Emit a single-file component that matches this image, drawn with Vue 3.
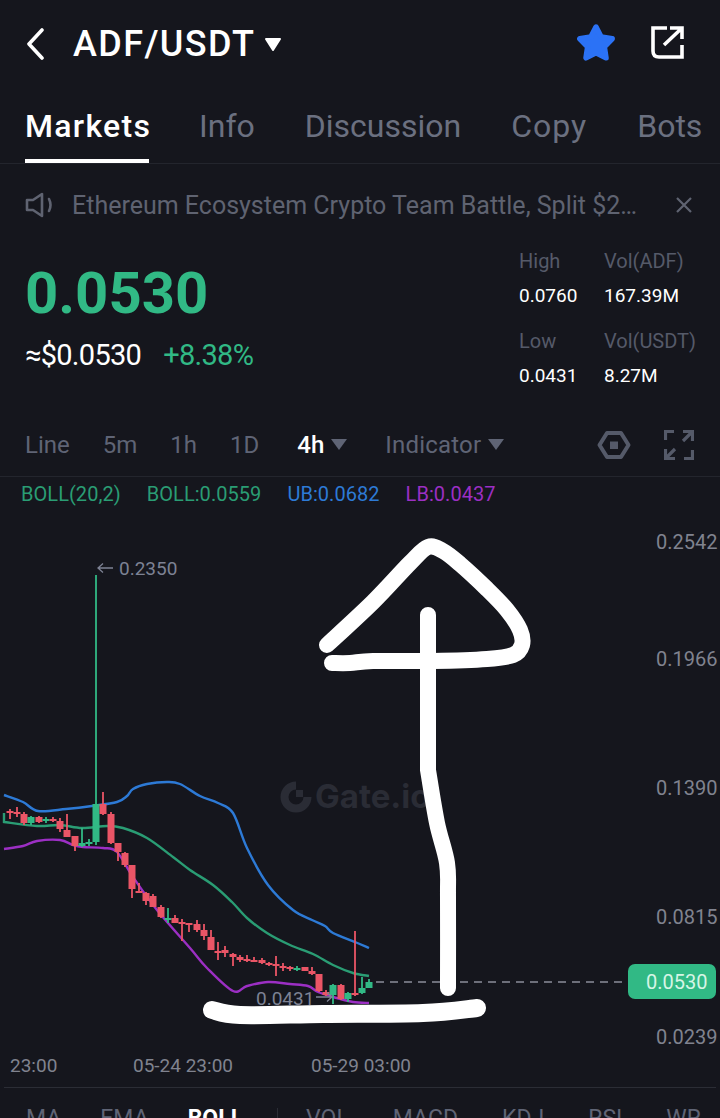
<template>
  <div class="page">
    <header class="top">
      <svg class="back" width="18" height="32" viewBox="0 0 18 32" fill="none">
        <path d="M16 2 3 16l13 14" stroke="#fff" stroke-width="3.6" stroke-linecap="round" stroke-linejoin="round"/>
      </svg>
      <h1 class="pair">ADF/USDT</h1>
      <svg class="pair-caret" width="18" height="15" viewBox="0 0 18 15">
        <path d="M2 2h14L9 13z" fill="#fff" stroke="#fff" stroke-width="2" stroke-linejoin="round"/>
      </svg>
      <svg class="star" width="44" height="44" viewBox="0 0 40 40">
        <polygon points="20,5.5 24.7,14.5 34.7,16.2 27.6,23.5 29.1,33.5 20,29 10.9,33.5 12.4,23.5 5.3,16.2 15.3,14.5" fill="#2b72f6" stroke="#2b72f6" stroke-width="5" stroke-linejoin="round"/>
      </svg>
      <svg class="share" width="36" height="36" viewBox="0 0 36 36" fill="none" stroke="#fff" stroke-width="3.6">
        <path d="M18 3H4v23q0 6 6 6h23V20"/>
        <path d="M15 20 33 3M21 3h12v11"/>
      </svg>
    </header>

    <nav class="tabs">
      <span v-for="t in tabs" :key="t" class="tab" :class="{ active: t === 'Markets' }">{{ t }}</span>
    </nav>

    <div class="notice">
      <svg width="30" height="26" viewBox="0 0 30 26" fill="none" stroke="#5f6371" stroke-width="2.6" stroke-linejoin="round">
        <path d="M2 8h6l9-6v22l-9-6H2z"/>
        <path d="M24 7q3 6 0 12" stroke-linecap="round"/>
      </svg>
      <span class="notice-text">Ethereum Ecosystem Crypto Team Battle, Split $2…</span>
      <svg width="16" height="16" viewBox="0 0 16 16" stroke="#5f6371" stroke-width="2.2">
        <path d="m1 1 14 14M15 1 1 15"/>
      </svg>
    </div>

    <section class="ticker">
      <div class="ticker-left">
        <div class="last">0.0530</div>
        <div class="sub">
          <span class="fiat">≈$0.0530</span>
          <span class="change">+8.38%</span>
        </div>
      </div>
      <div class="stats">
        <div v-for="s in stats" :key="s.label" class="stat">
          <div class="stat-label">{{ s.label }}</div>
          <div class="stat-value">{{ s.value }}</div>
        </div>
      </div>
    </section>

    <div class="toolbar">
      <span class="iv">Line</span>
      <span class="iv">5m</span>
      <span class="iv">1h</span>
      <span class="iv">1D</span>
      <span class="iv current">4h</span>
      <svg class="caret" width="18" height="13" viewBox="0 0 18 13"><path d="M1 1h16L9 12z" fill="#5f6475"/></svg>
      <span class="iv ind">Indicator</span>
      <svg class="caret" width="18" height="13" viewBox="0 0 18 13"><path d="M1 1h16L9 12z" fill="#5f6475"/></svg>
      <svg class="hex" width="34" height="28" viewBox="0 0 34 28" fill="none">
        <path d="M2.500 14 10 2h14l7.500 12L24 26H10z" stroke="#555a69" stroke-width="4" stroke-linejoin="round"/>
        <rect x="13" y="10.500" width="8" height="7.500" fill="#555a69"/>
      </svg>
      <svg class="full" width="30" height="30" viewBox="0 0 30 30" fill="none" stroke="#555a69" stroke-width="3.200">
        <path d="M1.500 10V1.500H10M28.500 20v8.500H20"/>
        <path d="M19 1.500h9.500V11M28 2l-9 9M1.500 19v9.500H11M2 28l9-9"/>
      </svg>
    </div>

    <div class="legend">
      <span class="green">BOLL(20,2)</span>
      <span class="green">BOLL:0.0559</span>
      <span class="blue">UB:0.0682</span>
      <span class="purple">LB:0.0437</span>
    </div>

    <svg class="chart" width="720" height="577" viewBox="0 510 720 577">
      <!-- watermark -->
      <g>
        <path d="M296 785.500a11.500 11.500 0 1 0 11.500 11.500" fill="none" stroke="#2a2c35" stroke-width="8"/>
        <rect x="296" y="790" width="7" height="7" fill="#2a2c35"/>
        <text x="315" y="808" class="mark">Gate.io</text>
      </g>

      <path :d="upper" fill="none" stroke="#2d7ad6" stroke-width="2.400"/>
      <path :d="middle" fill="none" stroke="#2a9d74" stroke-width="2.400"/>
      <path :d="lower" fill="none" stroke="#9c2fc4" stroke-width="2.400"/>

      <g v-for="c in candles" :key="c.x" :fill="c.up ? green : red" :stroke="c.up ? green : red">
        <line :x1="c.x" :x2="c.x" :y1="c.hi" :y2="c.lo" stroke-width="1.800"/>
        <rect :x="c.x - 3.500" :y="c.top" width="7" :height="Math.max(c.bot - c.top, 2)" stroke="none"/>
      </g>

      <line x1="376" x2="628" y1="982" y2="982" stroke="#8a8d99" stroke-width="1.500" stroke-dasharray="8 6"/>

      <text x="119" y="574.500" class="note">0.2350</text>
      <path d="M113 568H98m5-4.500-5 4.500 5 4.500" fill="none" stroke="#7d8294" stroke-width="1.300"/>
      <text x="256" y="1005" class="note">0.0431</text>
      <path d="M316 997h16m-5-4.500 5 4.500-5 4.500" fill="none" stroke="#7d8294" stroke-width="1.300"/>

      <text v-for="p in prices" :key="p.v" x="656" :y="p.y" class="axis">{{ p.v }}</text>
      <text v-for="d in dates" :key="d.v" :x="d.x" y="1072" class="axis date">{{ d.v }}</text>

      <rect x="628" y="964" width="88" height="35" rx="7" :fill="green"/>
      <text x="646" y="989" class="tag">0.0530</text>

      <!-- hand drawn marks -->
      <g fill="none" stroke="#fff" stroke-linecap="round" stroke-linejoin="round">
        <path :d="head" stroke-width="16"/>
        <path :d="shaft" stroke-width="16"/>
        <path :d="base" stroke-width="18"/>
      </g>
    </svg>

    <div class="bottom">
      <span>MA</span>
      <span>EMA</span>
      <span class="on">BOLL</span>
      <div class="more">
        <span v-for="b in moreTabs" :key="b">{{ b }}</span>
      </div>
    </div>
  </div>
</template>

<script setup>
const tabs = ['Markets', 'Info', 'Discussion', 'Copy', 'Bots']
const moreTabs = ['VOL', 'MACD', 'KDJ', 'RSI', 'WR']

const stats = [
  { label: 'High', value: '0.0760' },
  { label: 'Vol(ADF)', value: '167.39M' },
  { label: 'Low', value: '0.0431' },
  { label: 'Vol(USDT)', value: '8.27M' }
]

const green = '#31b985'
const red = '#ea5566'

// catmull-rom through the points, turned into cubic beziers
const smooth = (str) => {
  const p = str.split(' ').map((s) => s.split(',').map(Number))
  let d = `M${p[0][0]} ${p[0][1]}`
  for (let i = 0; i < p.length - 1; i++) {
    const a = p[i - 1] || p[i]
    const b = p[i]
    const c = p[i + 1]
    const e = p[i + 2] || c
    const c1 = [b[0] + (c[0] - a[0]) / 6, b[1] + (c[1] - a[1]) / 6]
    const c2 = [c[0] - (e[0] - b[0]) / 6, c[1] - (e[1] - b[1]) / 6]
    d += `C${c1[0]} ${c1[1]} ${c2[0]} ${c2[1]} ${c[0]} ${c[1]}`
  }
  return d
}

const upper = smooth('4,795 23,802 38,811 66,809 92,806 117,802 127,796 133,789 147,784 167,782 180,784 200,796 218,803 233,813 247,848 268,885 293,910 312,920 325,926 333,933 355,942 369,948')
const middle = 'M4 813V822' + smooth('4,822 37,826 60,825 82,828 107,826 123,828 147,838 173,857 190,870 213,885 232,902 247,918 267,933 290,945 313,954 333,965 353,973 369,976').replace('M4 822', '')
const lower = smooth('4,849 23,846 37,841 60,840 73,845 83,847 103,848 117,852 133,877 157,910 190,948 207,968 233,991 247,986 268,982 290,984 308,986 318,992 333,997 353,1002 369,1003')

const head = smooth('327,645 373,602 410,563 428,547 443,551 460,564 487,589 507,610 520,630 522,645 513,655 487,659 433,661 373,661 350,663 332,663')
const shaft = 'M428 615V770' + smooth('428,770 437,823 447,863 448,897 448,988').replace('M428 770', '')
const base = smooth('212,1010 240,1015 323,1014 423,1013 477,1008')

// x, wick top, wick bottom, body top, body bottom, rising
const raw = [
  [10, 809, 819, 811, 813], [17, 807, 817, 812, 813], [24, 812, 825, 814, 823], [31, 816, 825, 817, 823, 1],
  [39, 816, 823, 817, 822], [46, 817, 823, 819, 821, 1], [53, 817, 822, 819, 820], [60, 818, 832, 821, 829],
  [67, 814, 837, 830, 837], [75, 836, 851, 836, 846], [82, 828, 847, 843, 846, 1], [89, 839, 846, 842, 843, 1],
  [96, 575, 845, 804, 842, 1], [103, 792, 815, 804, 814], [111, 812, 844, 814, 843], [118, 843, 861, 843, 852],
  [125, 852, 867, 853, 865], [132, 865, 898, 865, 889], [139, 883, 892, 891, 892], [146, 892, 905, 893, 901],
  [153, 894, 907, 896, 907], [161, 905, 918, 907, 917], [168, 908, 923, 918, 919, 1], [175, 915, 923, 918, 923],
  [182, 919, 941, 922, 923], [189, 923, 932, 923, 924], [197, 920, 932, 924, 930], [204, 924, 940, 930, 936],
  [211, 930, 950, 937, 950], [218, 942, 960, 951, 952], [225, 946, 957, 950, 953], [233, 953, 966, 954, 957],
  [240, 955, 962, 957, 960], [247, 955, 962, 959, 960], [254, 957, 962, 960, 961], [262, 958, 964, 960, 963],
  [269, 962, 966, 963, 964], [276, 956, 976, 964, 966], [283, 963, 971, 966, 968], [290, 966, 971, 967, 968],
  [297, 966, 971, 968, 969, 1], [305, 967, 971, 967, 971], [312, 967, 975, 971, 974], [319, 974, 992, 974, 991],
  [326, 990, 996, 992, 995], [333, 984, 1004, 985, 995, 1], [341, 984, 1000, 985, 999], [348, 992, 1002, 993, 999, 1],
  [355, 931, 996, 993, 995], [362, 977, 994, 988, 993, 1], [369, 979, 988, 982, 988, 1]
]
const candles = raw.map(([x, hi, lo, top, bot, up]) => ({ x, hi, lo, top, bot, up: !!up }))

const prices = [
  { v: '0.2542', y: 549 },
  { v: '0.1966', y: 666 },
  { v: '0.1390', y: 795 },
  { v: '0.0815', y: 924 },
  { v: '0.0239', y: 1044 }
]

const dates = [
  { v: '23:00', x: 10 },
  { v: '05-24 23:00', x: 133 },
  { v: '05-29 03:00', x: 311 }
]
</script>

<style>
html, body {
  background: #15161d;
}
</style>

<style scoped>
.page {
  width: 720px;
  height: 1118px;
  overflow: hidden;
  background: #15161d;
  color: #fff;
  font-family: Roboto, "Noto Sans", sans-serif;
}

.top {
  display: flex;
  align-items: center;
  height: 88px;
  padding-left: 26px;
}

.pair {
  margin: 0 0 0 29px;
  font-size: 36px;
  font-weight: 500;
  letter-spacing: 1.4px;
  line-height: 1;
}

.pair-caret {
  margin-left: 9px;
}

.star {
  margin-left: auto;
  margin-top: -3px;
}

.share {
  margin-left: 31px;
  margin-right: 35px;
  margin-top: -3px;
}

.tabs {
  display: flex;
  height: 76px;
  gap: 50px;
  padding-left: 25px;
  border-bottom: 1px solid #23252d;
  box-sizing: border-box;
}

.tab {
  height: 75px;
  box-sizing: border-box;
  padding-top: 18px;
  font-size: 32px;
  line-height: 40px;
  color: #6b7080;
  white-space: nowrap;
}

.tab:nth-child(4) {
  letter-spacing: 1px;
}

.tab.active {
  width: 124px;
  color: #fff;
  font-weight: 500;
  letter-spacing: 1.300px;
  border-bottom: 4px solid #fff;
}

.notice {
  display: flex;
  align-items: center;
  height: 82px;
  padding-left: 25px;
  color: #5f6371;
}

.notice-text {
  margin-left: 17px;
  width: 604px;
  font-size: 25px;
  white-space: nowrap;
}

.ticker {
  display: flex;
  height: 164px;
}

.ticker-left {
  width: 519px;
  padding-left: 25px;
  box-sizing: border-box;
}

.last {
  margin-top: 14px;
  font-size: 58px;
  font-weight: 700;
  line-height: 66px;
  color: #31b985;
}

.sub {
  margin-top: 10px;
  display: flex;
  gap: 22px;
  font-size: 29px;
  line-height: 38px;
  letter-spacing: -0.7px;
}

.change {
  color: #31b985;
}

.stats {
  display: grid;
  grid-template-columns: 85px 115px;
  grid-auto-rows: 80px;
  margin-top: 1px;
}

.stat-label {
  margin-top: 1px;
  font-size: 20px;
  line-height: 26px;
  color: #555a69;
  white-space: nowrap;
}

.stat-value {
  margin-top: 9px;
  font-size: 19px;
  line-height: 26px;
  white-space: nowrap;
}

.toolbar {
  display: flex;
  align-items: center;
  height: 67px;
  padding-top: 3px;
  padding-left: 25px;
  border-bottom: 1px solid #23252d;
  box-sizing: border-box;
}

.iv {
  margin-right: 33px;
  font-size: 24px;
  color: #5f6475;
}

.iv.current {
  color: #fff;
  font-weight: 500;
  margin-left: 5px;
  margin-right: 6px;
}

.iv.ind {
  margin-left: 37px;
  margin-right: 6px;
  letter-spacing: 0.2px;
}

.caret {
  flex: none;
}

.hex {
  margin-left: 92px;
}

.full {
  margin-left: 33px;
}

.legend {
  display: flex;
  align-items: center;
  gap: 26px;
  height: 33px;
  padding-left: 21px;
  font-size: 20px;
  letter-spacing: 0.05px;
}

.green {
  color: #2a9d74;
}

.blue {
  color: #2d7ad6;
}

.purple {
  color: #9c2fc4;
}

.chart {
  display: block;
}

.mark {
  font-family: Inter, sans-serif;
  font-size: 33px;
  font-weight: 700;
  fill: #2a2c35;
}

.note {
  font-size: 19px;
  fill: #7d8294;
}

.axis {
  font-size: 20px;
  fill: #80838f;
}

.date {
  font-size: 19px;
}

.tag {
  font-size: 20px;
  fill: #d6f5e6;
}

.bottom {
  display: flex;
  gap: 39px;
  margin: 0 4px;
  padding: 17px 0 0 22px;
  border-top: 1px solid #2b2d35;
  font-size: 23px;
  color: #5f6475;
  white-space: nowrap;
}

.on {
  color: #fff;
  font-weight: 700;
}

.more {
  display: flex;
  gap: 44px;
  margin-left: 24px;
  position: relative;
}

.more::before {
  content: '';
  position: absolute;
  left: -29px;
  top: 3px;
  width: 1px;
  height: 24px;
  background: #2b2d35;
}
</style>
